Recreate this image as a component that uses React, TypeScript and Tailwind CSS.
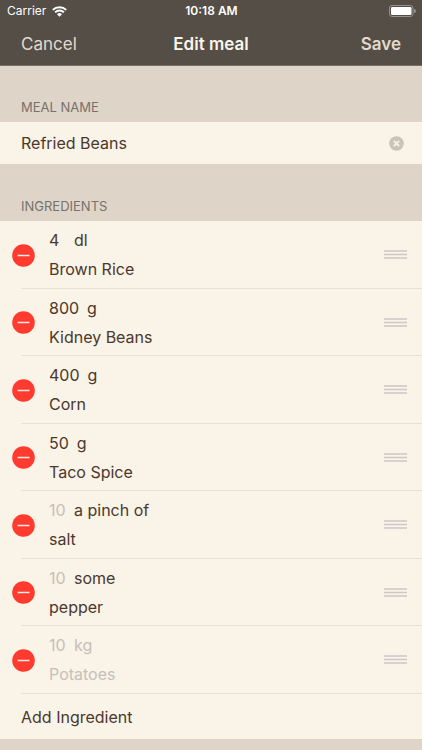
import React, { useState } from 'react';

interface Ingredient {
    id: number;
    amount: string;
    unit: string;
    name: string;
}

const initialIngredients: Ingredient[] = [
    { id: 1, amount: '4', unit: 'dl', name: 'Brown Rice' },
    { id: 2, amount: '800', unit: 'g', name: 'Kidney Beans' },
    { id: 3, amount: '400', unit: 'g', name: 'Corn' },
    { id: 4, amount: '50', unit: 'g', name: 'Taco Spice' },
    { id: 5, amount: '', unit: 'a pinch of', name: 'salt' },
    { id: 6, amount: '', unit: 'some', name: 'pepper' },
    { id: 7, amount: '', unit: '', name: '' },
];

const WifiIcon = () => (
    <svg width="15" height="11" viewBox="0 0 15 11" fill="none" stroke="currentColor" strokeWidth="2" aria-hidden="true">
        <path d="M0.8 3.9 a9.5 9.5 0 0 1 13.4 0" />
        <path d="M3.1 6.4 a6.2 6.2 0 0 1 8.8 0" />
        <path d="M7.5 10.8 L5 8.3 a3.5 3.5 0 0 1 5 0 Z" fill="currentColor" stroke="none" />
    </svg>
);

const BatteryIcon = () => (
    <svg width="27" height="12" viewBox="0 0 27 12" aria-hidden="true">
        <rect x="0.5" y="0.5" width="23.5" height="11" rx="2.6" fill="none" stroke="#96928c" />
        <rect x="2" y="2" width="20.5" height="8" rx="1.2" fill="#ffffff" />
        <path d="M25 4 a2 2 0 0 1 0 4 Z" fill="#96928c" />
    </svg>
);

const ClearIcon = () => (
    <svg width="15" height="15" viewBox="0 0 15 15" aria-hidden="true">
        <circle cx="7.5" cy="7.5" r="7.3" fill="#c8c4ba" />
        <path d="M4.8 4.8 L10.2 10.2 M10.2 4.8 L4.8 10.2" stroke="#faf3e7" strokeWidth="1.7" />
    </svg>
);

const RemoveIcon = () => (
    <svg width="23" height="23" viewBox="0 0 23 23" aria-hidden="true">
        <circle cx="11.5" cy="11.5" r="11.3" fill="#ff3b30" />
        <path d="M5.5 11.5 H17.5" stroke="#ffe9e2" strokeWidth="1.5" />
    </svg>
);

const ReorderIcon = () => (
    <svg width="23" height="9" viewBox="0 0 23 9" stroke="#cbc8c6" strokeWidth="1.5" aria-hidden="true">
        <path d="M0 1 H23 M0 4.5 H23 M0 8 H23" />
    </svg>
);

const fieldClass = 'block bg-transparent p-0 outline-none placeholder:text-[#c5c0ba] placeholder:opacity-100';

const App: React.FC = () => {
    const [mealName, setMealName] = useState('Refried Beans');
    const [ingredients, setIngredients] = useState(initialIngredients);

    const update = (id: number, key: 'amount' | 'unit' | 'name', value: string) => {
        setIngredients(ingredients.map((item) => (item.id === id ? { ...item, [key]: value } : item)));
    };

    const remove = (id: number) => {
        setIngredients(ingredients.filter((item) => item.id !== id));
    };

    const add = () => {
        setIngredients([...ingredients, { id: Date.now(), amount: '', unit: '', name: '' }]);
    };

    return (
        <div className="min-h-screen bg-[#ded5c8] text-base leading-6 text-[#4b382d] font-['Inter',sans-serif]">
            <header className="border-b border-[#777067] bg-[#544e46] text-white">
                {/* Status bar */}
                <div className="grid h-[22px] grid-cols-3 items-center pl-[7px] pr-[6px] text-xs">
                    <span className="flex items-center gap-[6px]">
                        Carrier <WifiIcon />
                    </span>
                    <span className="text-center font-semibold">10:18 AM</span>
                    <span className="flex justify-end">
                        <BatteryIcon />
                    </span>
                </div>

                {/* Navigation bar */}
                <nav className="grid h-[43px] grid-cols-3 items-center px-[21px] text-[17px] text-[#e3d9cc]">
                    <button className="text-left">Cancel</button>
                    <h1 className="text-center font-semibold text-[#fbf5ea]">Edit meal</h1>
                    <button className="text-right font-semibold">Save</button>
                </nav>
            </header>

            <main>
                <section>
                    <h2 className="px-[21px] pt-[31px] pb-[5px] text-[13px] leading-5 text-[#78716b]">
                        <label htmlFor="meal-name">MEAL NAME</label>
                    </h2>
                    <div className="flex h-[42px] items-center bg-[#faf3e7] pl-[21px] pr-[18px]">
                        <input
                            id="meal-name"
                            className={`${fieldClass} min-w-0 flex-1`}
                            value={mealName}
                            onChange={(e) => setMealName(e.target.value)}
                        />
                        <button aria-label="Clear meal name" onClick={() => setMealName('')}>
                            <ClearIcon />
                        </button>
                    </div>
                </section>

                <section>
                    <h2 className="px-[21px] pt-8 pb-[5px] text-[13px] leading-5 text-[#78716b]">INGREDIENTS</h2>
                    <ul className="bg-[#faf3e7]">
                        {ingredients.map((item) => (
                            <li key={item.id} className="flex items-stretch pl-3 odd:min-h-[68px] even:min-h-[67px]">
                                <button className="z-10 shrink-0" aria-label="Remove ingredient" onClick={() => remove(item.id)}>
                                    <RemoveIcon />
                                </button>
                                <div className="-ml-[14px] flex min-w-0 flex-1 items-center border-b border-[#e9e1d7] pl-7 pr-[15px]">
                                    <div className="flex min-w-0 flex-1 flex-col gap-[5px]">
                                        <div className="flex gap-2">
                                            <input
                                                aria-label="Amount"
                                                className={`${fieldClass} min-w-[17px] [field-sizing:content]`}
                                                placeholder="10"
                                                value={item.amount}
                                                onChange={(e) => update(item.id, 'amount', e.target.value)}
                                            />
                                            <input
                                                aria-label="Unit"
                                                className={`${fieldClass} min-w-0 flex-1`}
                                                placeholder="kg"
                                                value={item.unit}
                                                onChange={(e) => update(item.id, 'unit', e.target.value)}
                                            />
                                        </div>
                                        <input
                                            aria-label="Ingredient name"
                                            className={`${fieldClass} w-full`}
                                            placeholder="Potatoes"
                                            value={item.name}
                                            onChange={(e) => update(item.id, 'name', e.target.value)}
                                        />
                                    </div>
                                    <button className="cursor-grab" aria-label="Reorder ingredient">
                                        <ReorderIcon />
                                    </button>
                                </div>
                            </li>
                        ))}
                    </ul>
                    <button className="block h-[45px] w-full bg-[#faf3e7] px-[21px] text-left" onClick={add}>
                        Add Ingredient
                    </button>
                </section>
            </main>
        </div>
    );
};

export default App;
